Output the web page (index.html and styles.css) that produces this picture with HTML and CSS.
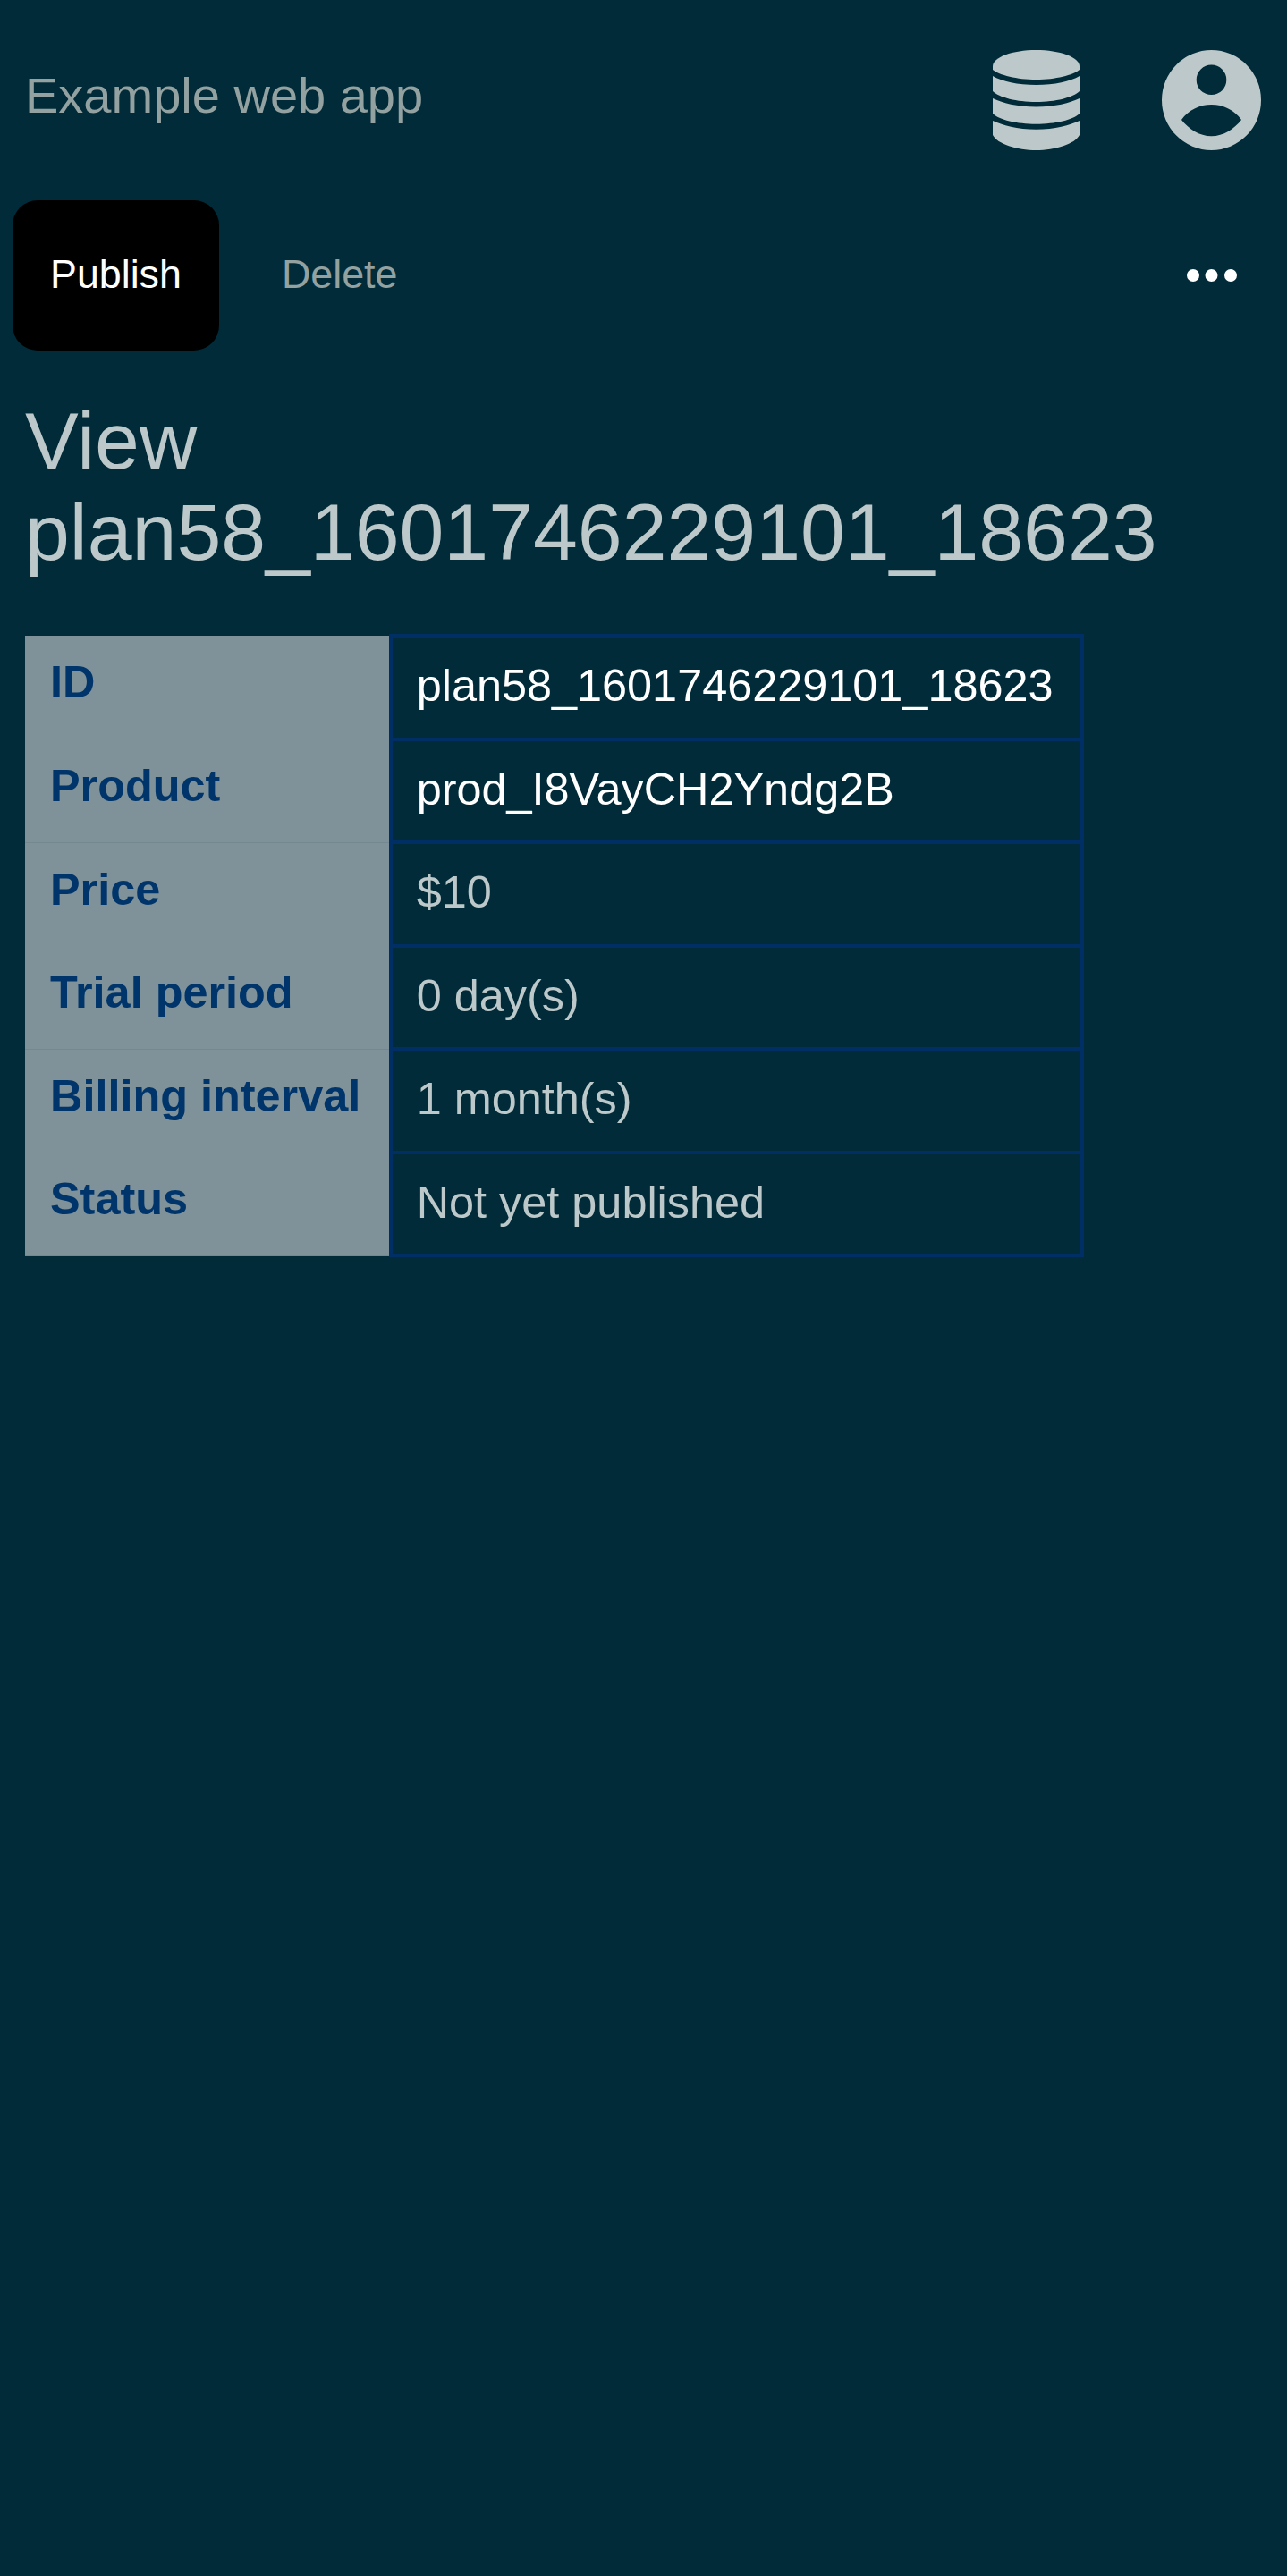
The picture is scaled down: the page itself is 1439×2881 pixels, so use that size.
FILE: index.html
```html
<!doctype html>
<html lang="en">
<head>
    <meta charset="UTF-8">
    <title>Example web app</title>
    <link rel="stylesheet" href="styles.css">
</head>
<body>
<header class="topbar">
    <a class="brand">Example web app</a>
    <div class="topbar-icons">
        <svg class="icon-db" viewBox="0 0 97 112" width="97" height="112">
            <path d="M0 18C0 8 22 0 48.500 0S97 8 97 18V22C90 28 70 33 48.500 33S7 28 0 22Z"/>
            <path d="M0 29C10 35 28 39 48.500 39S87 35 97 29V46C90 53 70 58 48.500 58S7 53 0 46Z"/>
            <path d="M0 54C10 59 28 63.500 48.500 63.500S87 59 97 54V71C90 78 70 82.700 48.500 82.700S7 78 0 71Z"/>
            <path d="M0 79C10 84 28 88.700 48.500 88.700S87 84 97 79V95C92 105 70 112 48.500 112S5 105 0 95Z"/>
        </svg>
        <svg class="icon-user" viewBox="0 0 111 112" width="111" height="112">
            <path fill-rule="evenodd" d="M55.500 0A55.500 56 0 1 1 55.500 112A55.500 56 0 1 1 55.500 0ZM55.500 16.500A16.800 16.800 0 1 0 55.500 50.100A16.800 16.800 0 1 0 55.500 16.500ZM22 78C30 88 42 96.300 55.500 96.300S81 88 89 78C81 67 69 61 55.500 61S30 67 22 78Z"/>
        </svg>
    </div>
</header>

<nav class="toolbar">
    <a class="tool tool-active">Publish</a>
    <a class="tool">Delete</a>
    <a class="tool-more">
        <svg viewBox="0 0 56 14" width="56" height="14">
            <circle cx="7" cy="7" r="7"/>
            <circle cx="27.500" cy="7" r="7"/>
            <circle cx="49" cy="7" r="7"/>
        </svg>
    </a>
</nav>

<main class="content">
    <h1 class="title">View plan58_1601746229101_18623</h1>
    <table class="detail">
        <tr><th>ID</th><td class="strong">plan58_1601746229101_18623</td></tr>
        <tr><th>Product</th><td class="strong">prod_I8VayCH2Yndg2B</td></tr>
        <tr><th>Price</th><td>$10</td></tr>
        <tr><th>Trial period</th><td>0 day(s)</td></tr>
        <tr><th>Billing interval</th><td>1 month(s)</td></tr>
        <tr><th>Status</th><td>Not yet published</td></tr>
    </table>
</main>
</body>
</html>
```

FILE: styles.css
```css
*{margin: 0;padding: 0;box-sizing: border-box}
html,body{min-height: 100%}
body{
    background: #012b38;
    color: #bcc8c9;
    font-family: "Liberation Sans", Arial, sans-serif;
    min-height: 2881px;
}

.topbar{
    display: flex;
    align-items: center;
    justify-content: space-between;
    padding: 56px 29px 0 28px;
}
.brand{font-size: 56px;line-height: 84px;margin-bottom: 11px;color: #93a1a1}
.topbar-icons{display: flex;align-items: center;gap: 92px}
.topbar-icons svg{display: block;fill: #bcc8c9}

.toolbar{
    display: flex;
    align-items: center;
    margin-top: 56px;
    padding: 0 29px 0 14px;
}
.tool{
    height: 168px;
    padding: 0 42px;
    margin-right: 28px;
    font-size: 44.8px;
    line-height: 164px;
    border-radius: 28px;
    color: #93a1a1;
}
.tool-active{background: #000;color: #fff}
.tool-more{margin-left: auto;margin-right: 27px}
.tool-more svg{display: block;fill: #fff}

.content{padding: 0 28px}
.title{
    margin-top: 50px;
    font-size: 89.6px;
    font-weight: 400;
    line-height: 102px;
    color: #bcc8c9;
}
.detail{
    margin-top: 63px;
    border-collapse: collapse;
    font-size: 50.4px;
    line-height: 75.5px;
}
.detail th{
    padding: 14px 31.500px 24px 28px;
    text-align: left;
    vertical-align: top;
    font-weight: 700;
    color: #00356b;
    background: #7f9299;
}
.detail tr:nth-child(2n) th{border-bottom: 1px solid #74888f}
.detail td{
    padding: 16px 30px 20px 27px;
    border: 4px solid #002f66;
}
.detail td.strong{color: #fff}
```
